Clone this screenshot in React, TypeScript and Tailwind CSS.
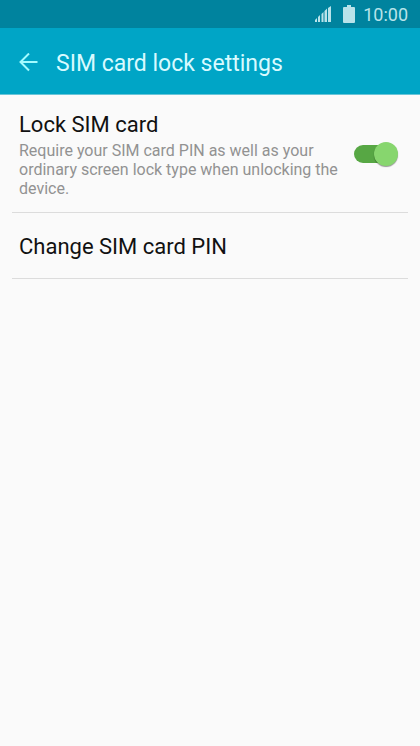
import { useState } from "react";

function StatusBar() {
  return (
    <div className="flex h-7 items-center justify-end bg-[#00839e] px-3 text-[#b9e3ea]">
      <svg className="mr-3 h-4 w-4" viewBox="0 0 16 16" fill="currentColor" aria-hidden="true">
        <path d="M0 16v-2l2-2v4zM3 16v-5l2-2v7zM6.500 16V8l2-2v10zM9.500 16V5l2.500-2.500V16zM13 16V2l3-2v16z" />
      </svg>
      <svg className="mr-2 h-[18px] w-3" viewBox="0 0 12 18" fill="currentColor" aria-hidden="true">
        <path d="M4 0h4v2h3q1 0 1 1v14q0 1-1 1H1q-1 0-1-1V3q0-1 1-1h3z" />
      </svg>
      <time className="pt-px text-[18px] leading-7">10:00</time>
    </div>
  );
}

function Header() {
  return (
    <header className="flex h-[67px] items-center border-b border-[#69c5d8] bg-[#00a5c6] pt-[5px] pl-[18px] text-[#d8faff]">
      <button type="button" aria-label="Back" className="mr-[17px] text-[#a2fbff]">
        <svg className="h-[21px] w-[21px]" viewBox="0 0 21 21" fill="none" stroke="currentColor" strokeWidth="2" aria-hidden="true">
          <path d="M19.500 9H2.500M11 0.500L2.500 9L11 17.500" />
        </svg>
      </button>
      <h1 className="text-[23px] leading-7">SIM card lock settings</h1>
    </header>
  );
}

export default function App() {
  const [locked, setLocked] = useState(true);

  return (
    <div className="min-h-screen bg-[#fafafa] font-[Roboto,sans-serif]">
      <StatusBar />
      <Header />
      <main className="px-3">
        <label className="flex items-center justify-between border-b border-[#dcdcdc] pt-[15px] pr-[9px] pb-[14px] pl-[7px]">
          <span className="block max-w-[325px]">
            <span className="mb-px block text-[22px] leading-[30px] text-[#111]">Lock SIM card</span>
            <span className="block text-[16px] leading-[19px] text-[#929292]">
              Require your SIM card PIN as well as your ordinary screen lock type when unlocking the device.
            </span>
          </span>
          <span className="relative flex h-[26px] w-[45px] shrink-0 items-center">
            <input
              type="checkbox"
              role="switch"
              aria-label="Lock SIM card"
              checked={locked}
              onChange={(event) => setLocked(event.target.checked)}
              className="peer h-[18px] w-10 appearance-none rounded-full bg-[#b5b5b5] checked:bg-[#57a744]"
            />
            <span className="pointer-events-none absolute left-0 h-6 w-6 rounded-full bg-[#e5e5e5] shadow-[0_1px_1px_#0006] peer-checked:left-5 peer-checked:bg-[#87d66e]" />
          </span>
        </label>
        <button type="button" className="block w-full border-b border-[#dcdcdc] pt-5 pb-[17px] pl-[7px] text-left text-[22px] leading-7 text-[#111]">
          Change SIM card PIN
        </button>
      </main>
    </div>
  );
}
